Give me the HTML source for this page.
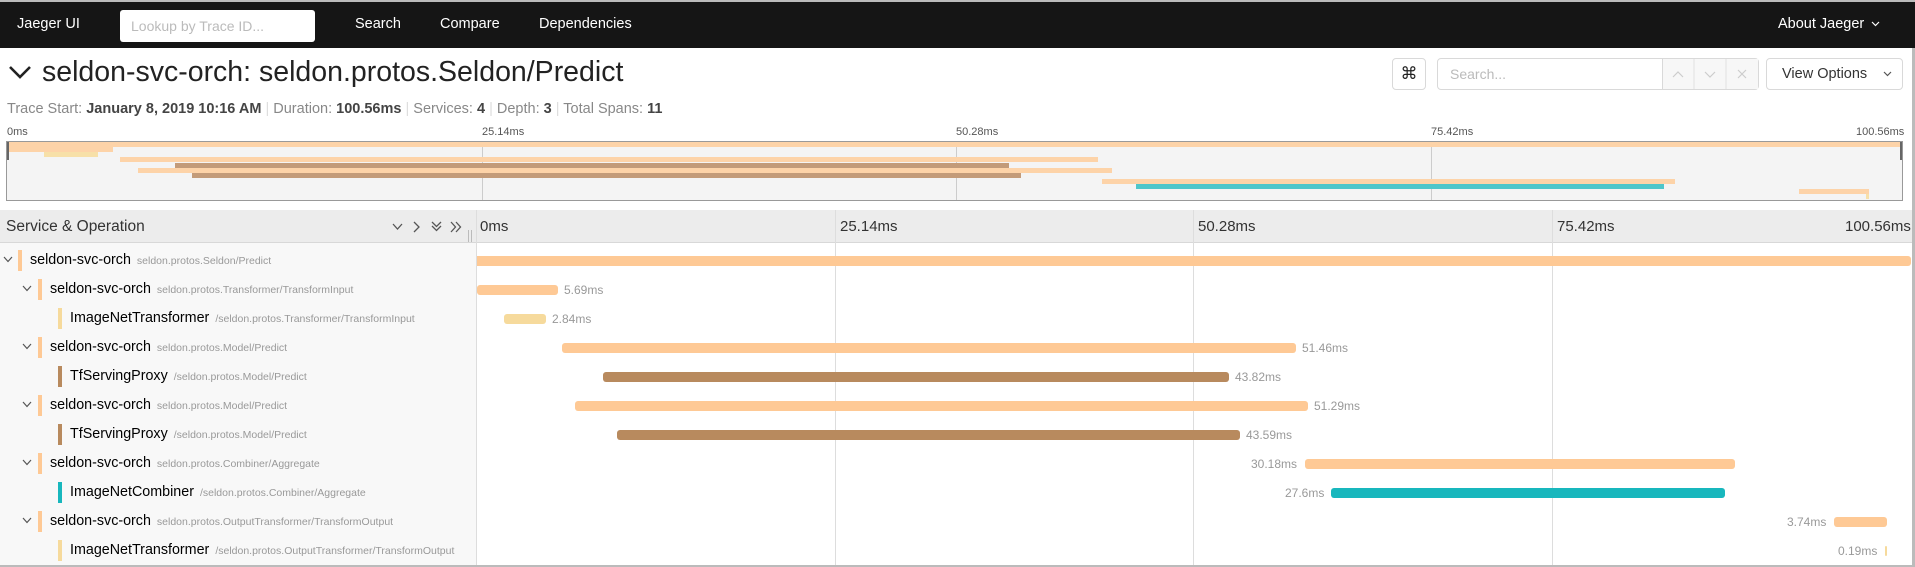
<!DOCTYPE html>
<html><head><meta charset="utf-8"><style>
*{box-sizing:border-box;margin:0;padding:0}
body{width:1915px;height:567px;overflow:hidden;background:#fff;font-family:"Liberation Sans",sans-serif;position:relative;color:#222}
.a{position:absolute;white-space:nowrap}
.nav{left:0;top:0;width:1915px;height:48px;background:#151515;border-top:2px solid #bbb}
.nav .a{color:#fff;font-size:14.5px;top:14px}
.btn{border:1px solid #d9d9d9;border-radius:4px;background:#fff}
.lbl{font-size:11px;color:#555}
.mm{position:absolute;height:5px}
.o{background:#fdd3a8}.b{background:#c39b79}.y{background:#f7e0a8}.t{background:#4ec6ca}
.row{position:absolute;left:0;width:476px;height:29px}
.chev{position:absolute;top:10px}
.cb{position:absolute;width:4px;height:21px;top:4px}
.nm{position:absolute;top:6px;font-size:14.3px;color:#000;white-space:nowrap}
.op{font-size:10.5px;color:#999;margin-left:6px}
.bar{position:absolute;height:10px;border-radius:3px}
.dl{position:absolute;font-size:12px;color:#999;white-space:nowrap}
.O{background:#fec995}.B{background:#b88a5e}.Y{background:#f6da9c}.T{background:#18b7bd}
.gl{position:absolute;width:1px;background:#ddd}
</style></head><body>
<div class="a nav">
<div class="a" style="left:17px">Jaeger UI</div>
<div class="a" style="left:120px;top:8px;width:195px;height:32px;background:#fff;border-radius:3px;color:#bbb;padding:8px 11px;font-size:14px">Lookup by Trace ID...</div>
<div class="a" style="left:355px">Search</div>
<div class="a" style="left:440px">Compare</div>
<div class="a" style="left:539px">Dependencies</div>
<div class="a" style="left:1778px">About Jaeger <svg width="9" height="6" viewBox="0 0 9 6" style="margin-left:3px;vertical-align:middle"><path d="M1 1 L4.5 4.5 L8 1" stroke="#fff" stroke-width="1.2" fill="none"/></svg></div>
</div>
<svg class="a" style="left:8px;top:64px" width="24" height="16" viewBox="0 0 24 16"><path d="M2 3 L12 13 L22 3" stroke="#222" stroke-width="2.6" fill="none"/></svg>
<div class="a" style="left:42px;top:56px;font-size:28.5px;color:#222">seldon-svc-orch: seldon.protos.Seldon/Predict</div>
<div class="a" style="left:7px;top:101px;font-size:14.5px;color:#888">Trace Start: <b style="color:#444">January 8, 2019 10:16 AM</b> <span style="color:#ddd">|</span> Duration: <b style="color:#444">100.56ms</b> <span style="color:#ddd">|</span> Services: <b style="color:#444">4</b> <span style="color:#ddd">|</span> Depth: <b style="color:#444">3</b> <span style="color:#ddd">|</span> Total Spans: <b style="color:#444">11</b></div>
<div class="a btn" style="left:1392px;top:58px;width:34px;height:32px;font-size:17px;text-align:center;line-height:30px">&#8984;</div>
<div class="a btn" style="left:1437px;top:58px;width:322px;height:32px"></div>
<div class="a" style="left:1450px;top:66px;font-size:14px;color:#bbb">Search...</div>
<div class="a" style="left:1662px;top:59px;width:96px;height:30px;background:#f7f7f7;border-left:1px solid #d9d9d9">
<svg style="position:absolute;left:0;top:0" width="96" height="30" viewBox="0 0 96 30"><path d="M10 18 L15 13 L20 18" stroke="#ccc" stroke-width="1.2" fill="none"/><path d="M42 13 L47 18 L52 13" stroke="#ccc" stroke-width="1.2" fill="none"/><path d="M31 0 V30 M63 0 V30" stroke="#e2e2e2"/><path d="M75 11 L83 19 M83 11 L75 19" stroke="#ccc" stroke-width="1.2"/></svg></div>
<div class="a btn" style="left:1766px;top:58px;width:137px;height:32px;font-size:14.5px;color:#333;padding:7px 15px">View Options <svg width="9" height="6" viewBox="0 0 9 6" style="margin-left:12px;vertical-align:middle"><path d="M1 1 L4.5 4.5 L8 1" stroke="#555" stroke-width="1.2" fill="none"/></svg></div>
<div class="a lbl" style="left:7px;top:126px">0ms</div>
<div class="a lbl" style="left:482px;top:126px">25.14ms</div>
<div class="a lbl" style="left:956px;top:126px">50.28ms</div>
<div class="a lbl" style="left:1431px;top:126px">75.42ms</div>
<div class="a lbl" style="left:1856px;top:126px">100.56ms</div>
<div class="a" style="left:6px;top:141px;width:1897px;height:60px;background:#f4f4f4;border:1px solid #999">
<div class="gl" style="left:475px;top:0;height:58px;background:#ccc"></div>
<div class="gl" style="left:949px;top:0;height:58px;background:#ccc"></div>
<div class="gl" style="left:1424px;top:0;height:58px;background:#ccc"></div>
<div class="mm o" style="left:0;top:0;width:1895px"></div>
<div class="mm o" style="left:0;top:5px;width:106px"></div>
<div class="mm y" style="left:37px;top:10px;width:54px"></div>
<div class="mm o" style="left:113px;top:15px;width:978px"></div>
<div class="mm b" style="left:168px;top:21px;width:834px"></div>
<div class="mm o" style="left:131px;top:26px;width:974px"></div>
<div class="mm b" style="left:185px;top:31px;width:829px"></div>
<div class="mm o" style="left:1095px;top:37px;width:573px"></div>
<div class="mm t" style="left:1129px;top:42px;width:528px"></div>
<div class="mm o" style="left:1792px;top:47px;width:70px"></div>
<div class="mm y" style="left:1859px;top:52px;width:3px"></div>
<div style="position:absolute;left:0;top:0;width:2px;height:18px;background:#666"></div>
<div style="position:absolute;right:0;top:0;width:2px;height:18px;background:#666"></div>
</div>
<div class="a" style="left:0;top:210px;width:1915px;height:33px;background:#ececec;border-bottom:1px solid #d8d8d8"></div>
<div class="a" style="left:0;top:243px;width:476px;height:322px;background:#f8f8f8"></div>
<div class="a" style="left:476px;top:210px;width:1px;height:355px;background:#ddd"></div>
<div class="a" style="left:0;top:565px;width:1915px;height:2px;background:#bbb"></div>
<div class="a" style="left:1912px;top:48px;width:3px;height:519px;background:#bbb"></div>
<div class="gl" style="left:835px;top:210px;height:355px"></div>
<div class="gl" style="left:1193px;top:210px;height:355px"></div>
<div class="gl" style="left:1552px;top:210px;height:355px"></div>
<div class="a" style="left:6px;top:218px;font-size:15.5px;color:#333">Service &amp; Operation</div>
<svg class="a" style="left:390px;top:220px" width="75" height="14" viewBox="0 0 75 14"><g stroke="#555" stroke-width="1.3" fill="none"><path d="M3 4 L7.5 9 L12 4"/><path d="M24 2 L29 7 L24 12"/><path d="M42 2 L46.5 6.5 L51 2 M42 6 L46.5 10.5 L51 6"/><path d="M61 2 L65.5 7 L61 12 M66 2 L70.5 7 L66 12"/></g></svg>
<div class="a" style="left:468px;top:230px;width:4px;height:12px;border-left:1px solid #bbb;border-right:1px solid #bbb"></div>
<div class="a" style="left:480px;top:218px;font-size:15px;color:#333">0ms</div>
<div class="a" style="left:840px;top:218px;font-size:15px;color:#333">25.14ms</div>
<div class="a" style="left:1198px;top:218px;font-size:15px;color:#333">50.28ms</div>
<div class="a" style="left:1557px;top:218px;font-size:15px;color:#333">75.42ms</div>
<div class="a" style="left:1845px;top:218px;font-size:15px;color:#333">100.56ms</div>

<svg width="0" height="0" style="position:absolute"><defs><path id="cv" d="M1 1 L5 5.5 L9 1" stroke="#555" stroke-width="1.2" fill="none"/></defs></svg>
<div class="row" style="top:246px"><svg class="chev" style="left:3px" width="10" height="7"><use href="#cv"/></svg><div class="cb O" style="left:18px"></div><div class="nm" style="left:30px">seldon-svc-orch<span class="op">seldon.protos.Seldon/Predict</span></div></div>
<div class="row" style="top:275px"><svg class="chev" style="left:22px" width="10" height="7"><use href="#cv"/></svg><div class="cb O" style="left:38px"></div><div class="nm" style="left:50px">seldon-svc-orch<span class="op">seldon.protos.Transformer/TransformInput</span></div></div>
<div class="row" style="top:304px"><div class="cb Y" style="left:58px"></div><div class="nm" style="left:70px">ImageNetTransformer<span class="op">/seldon.protos.Transformer/TransformInput</span></div></div>
<div class="row" style="top:333px"><svg class="chev" style="left:22px" width="10" height="7"><use href="#cv"/></svg><div class="cb O" style="left:38px"></div><div class="nm" style="left:50px">seldon-svc-orch<span class="op">seldon.protos.Model/Predict</span></div></div>
<div class="row" style="top:362px"><div class="cb B" style="left:58px"></div><div class="nm" style="left:70px">TfServingProxy<span class="op">/seldon.protos.Model/Predict</span></div></div>
<div class="row" style="top:391px"><svg class="chev" style="left:22px" width="10" height="7"><use href="#cv"/></svg><div class="cb O" style="left:38px"></div><div class="nm" style="left:50px">seldon-svc-orch<span class="op">seldon.protos.Model/Predict</span></div></div>
<div class="row" style="top:420px"><div class="cb B" style="left:58px"></div><div class="nm" style="left:70px">TfServingProxy<span class="op">/seldon.protos.Model/Predict</span></div></div>
<div class="row" style="top:449px"><svg class="chev" style="left:22px" width="10" height="7"><use href="#cv"/></svg><div class="cb O" style="left:38px"></div><div class="nm" style="left:50px">seldon-svc-orch<span class="op">seldon.protos.Combiner/Aggregate</span></div></div>
<div class="row" style="top:478px"><div class="cb T" style="left:58px"></div><div class="nm" style="left:70px">ImageNetCombiner<span class="op">/seldon.protos.Combiner/Aggregate</span></div></div>
<div class="row" style="top:507px"><svg class="chev" style="left:22px" width="10" height="7"><use href="#cv"/></svg><div class="cb O" style="left:38px"></div><div class="nm" style="left:50px">seldon-svc-orch<span class="op">seldon.protos.OutputTransformer/TransformOutput</span></div></div>
<div class="row" style="top:536px"><div class="cb Y" style="left:58px"></div><div class="nm" style="left:70px">ImageNetTransformer<span class="op">/seldon.protos.OutputTransformer/TransformOutput</span></div></div>

<div class="bar O" style="left:477px;top:256px;width:1434px;border-radius:0 3px 3px 0"></div>
<div class="bar O" style="left:477px;top:285px;width:81px"></div><div class="dl" style="left:564px;top:283px">5.69ms</div>
<div class="bar Y" style="left:504px;top:314px;width:42px"></div><div class="dl" style="left:552px;top:312px">2.84ms</div>
<div class="bar O" style="left:562px;top:343px;width:734px"></div><div class="dl" style="left:1302px;top:341px">51.46ms</div>
<div class="bar B" style="left:603px;top:372px;width:626px"></div><div class="dl" style="left:1235px;top:370px">43.82ms</div>
<div class="bar O" style="left:575px;top:401px;width:733px"></div><div class="dl" style="left:1314px;top:399px">51.29ms</div>
<div class="bar B" style="left:617px;top:430px;width:623px"></div><div class="dl" style="left:1246px;top:428px">43.59ms</div>
<div class="bar O" style="left:1305px;top:459px;width:430px"></div><div class="dl" style="left:1251px;top:457px">30.18ms</div>
<div class="bar T" style="left:1331px;top:488px;width:394px"></div><div class="dl" style="left:1285px;top:486px">27.6ms</div>
<div class="bar O" style="left:1834px;top:517px;width:53px"></div><div class="dl" style="left:1787px;top:515px">3.74ms</div>
<div class="bar Y" style="left:1885px;top:546px;width:2px"></div><div class="dl" style="left:1838px;top:544px">0.19ms</div>
</body></html>
